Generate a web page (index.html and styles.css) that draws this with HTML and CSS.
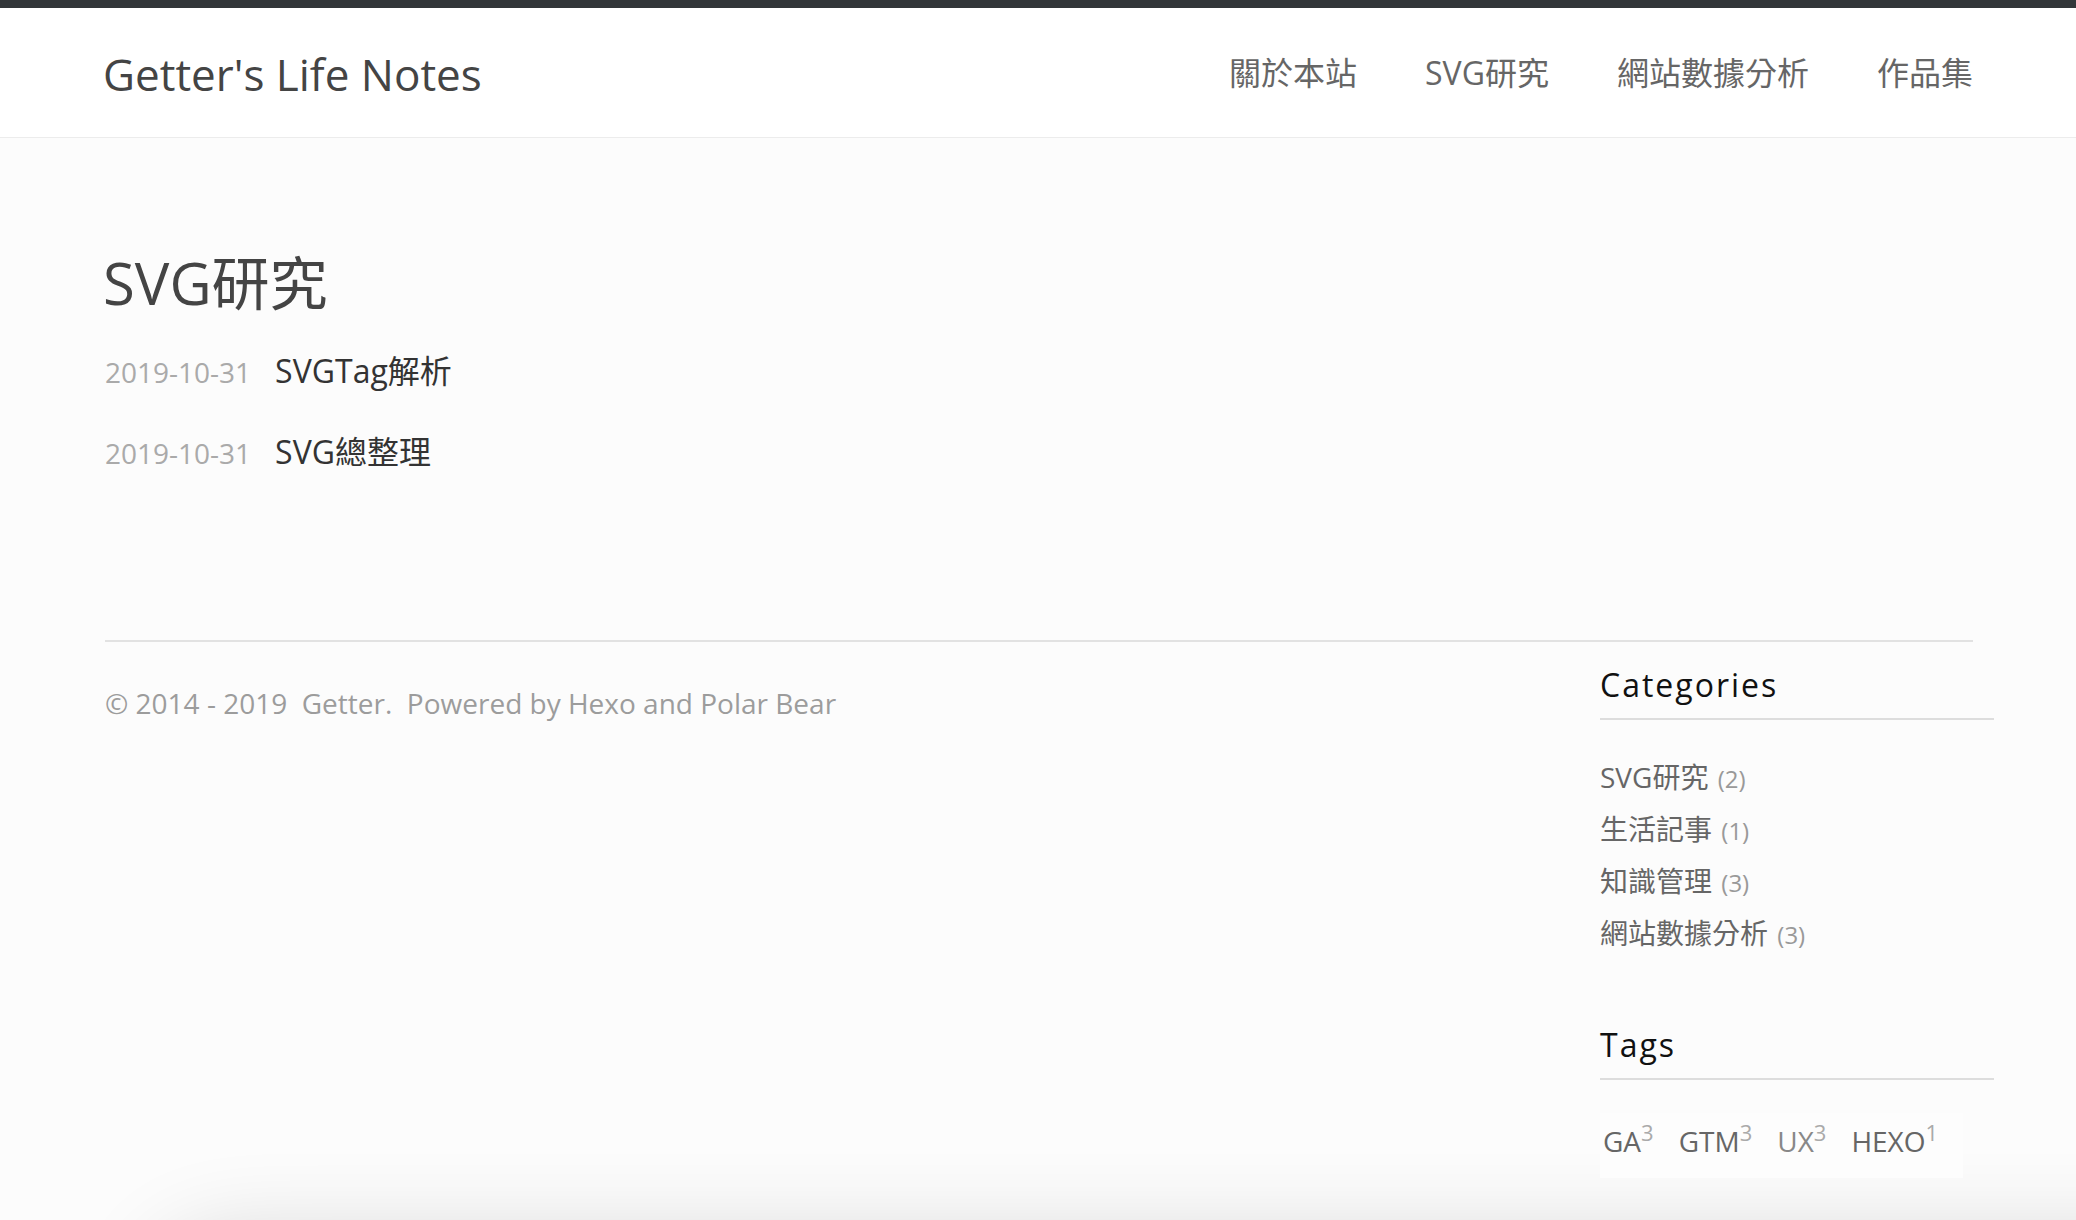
FILE: index.html
```html
<!DOCTYPE html>
<html lang="zh-Hant">
<head>
<meta charset="utf-8">
<title>SVG研究 | Getter's Life Notes</title>
<link rel="stylesheet" href="styles.css">
</head>
<body>
<header class="site-header">
  <div class="container header-inner">
    <a class="site-title" href="#">Getter's Life Notes</a>
    <nav class="site-nav">
      <a href="#">關於本站</a>
      <a href="#">SVG研究</a>
      <a href="#">網站數據分析</a>
      <a href="#">作品集</a>
    </nav>
  </div>
</header>

<main class="container main">
  <h1 class="page-title">SVG研究</h1>
  <ul class="post-list">
    <li class="post-row"><span class="post-date">2019-10-31</span><a class="post-link" href="#">SVGTag解析</a></li>
    <li class="post-row"><span class="post-date">2019-10-31</span><a class="post-link" href="#">SVG總整理</a></li>
  </ul>
</main>

<footer class="container footer">
  <div class="footer-row">
    <p class="copyright">©&nbsp;2014 - 2019&nbsp; Getter.&nbsp; Powered by Hexo and Polar Bear</p>
    <aside class="sidebar">
      <h3 class="widget-title">Categories</h3>
      <ul class="cat-list">
        <li><a href="#">SVG研究</a> <span class="count">(2)</span></li>
        <li><a href="#">生活記事</a> <span class="count">(1)</span></li>
        <li><a href="#">知識管理</a> <span class="count">(3)</span></li>
        <li><a href="#">網站數據分析</a> <span class="count">(3)</span></li>
      </ul>
      <h3 class="widget-title tags-title">Tags</h3>
      <div class="tag-cloud">
        <a class="tag" href="#">GA<sup>3</sup></a>
        <a class="tag" href="#">GTM<sup>3</sup></a>
        <a class="tag tag-light" href="#">UX<sup>3</sup></a>
        <a class="tag" href="#">HEXO<sup>1</sup></a>
      </div>
    </aside>
  </div>
</footer>

<div class="bottom-shade"></div>
</body>
</html>
```

FILE: styles.css
```css
html, body {
  margin: 0;
  padding: 0;
}

body {
  background: #fcfcfc;
  font-family: "Open Sans", "Noto Sans CJK TC", sans-serif;
  color: #444;
  overflow: hidden;
}

a {
  text-decoration: none;
  color: inherit;
}

ul {
  list-style: none;
  margin: 0;
  padding: 0;
}

.container {
  padding: 0 103px 0 105px;
}

/* Header */
.site-header {
  background: #fff;
  border-top: 8px solid #323639;
  border-bottom: 1px solid #ececec;
}

.header-inner {
  height: 129px;
  display: flex;
  align-items: center;
  justify-content: space-between;
}

.site-title {
  font-size: 44px;
  color: #444;
  margin-left: -2px;
  margin-top: 2px;
}

.site-nav {
  display: flex;
  gap: 68px;
  font-size: 32px;
  color: #666;
  margin-top: -3px;
}

/* Main */
.main {
  padding-top: 109px;
  padding-bottom: 166px;
}

.page-title {
  margin: 0 0 0 -2px;
  font-size: 58px;
  font-weight: 400;
  line-height: 72px;
  color: #444;
}

.post-list {
  margin-top: 30px;
  display: flex;
  flex-direction: column;
  gap: 37px;
}

.post-row {
  display: flex;
  align-items: baseline;
  height: 44px;
  line-height: 44px;
}

.post-date {
  font-size: 28px;
  color: #aaa;
  margin-right: 24px;
}

.post-link {
  font-size: 32px;
  color: #333;
}

/* Footer */
.footer {
  padding-bottom: 40px;
}

.footer-row {
  border-top: 2px solid #e2e2e2;
  display: flex;
  justify-content: space-between;
  align-items: flex-start;
  padding-top: 23px;
}

.copyright {
  margin: 18px 0 0 0;
  font-size: 28px;
  line-height: 40px;
  color: #9c9c9c;
}

.sidebar {
  width: 394px;
  margin-right: -21px;
}

.widget-title {
  margin: 0;
  font-size: 32px;
  font-weight: 400;
  letter-spacing: 2px;
  line-height: 40px;
  color: #111;
  padding-bottom: 13px;
  border-bottom: 2px solid #dddddd;
}

.cat-list {
  margin-top: 31px;
  font-size: 28px;
  color: #666;
}

.cat-list li {
  height: 52px;
  line-height: 52px;
  white-space: nowrap;
}

.count {
  font-size: 24px;
  line-height: 1;
  color: #999;
  margin-left: 2px;
}

.tags-title {
  margin-top: 66px;
}

.tag-cloud {
  position: relative;
  z-index: 2;
  margin-top: 33px;
  width: 360px;
  height: 56px;
  padding: 0 0 9px 3px;
  display: flex;
  gap: 25px;
  font-size: 28px;
  line-height: 56px;
  background: #fdfdfd;
  color: #666;
}

.tag sup {
  font-size: 22px;
  line-height: 0;
  vertical-align: 11px;
  color: #aaa;
  margin-left: 0;
}

.tag-light {
  color: #888;
}

/* soft shadow of a panel sitting just below the viewport */
.bottom-shade {
  position: fixed;
  left: 150px;
  right: -200px;
  top: 1238px;
  height: 200px;
  border-radius: 80px;
  background: #eee;
  box-shadow: 0 0 90px rgba(0, 0, 0, 0.16);
  pointer-events: none;
  z-index: 1;
}
```
